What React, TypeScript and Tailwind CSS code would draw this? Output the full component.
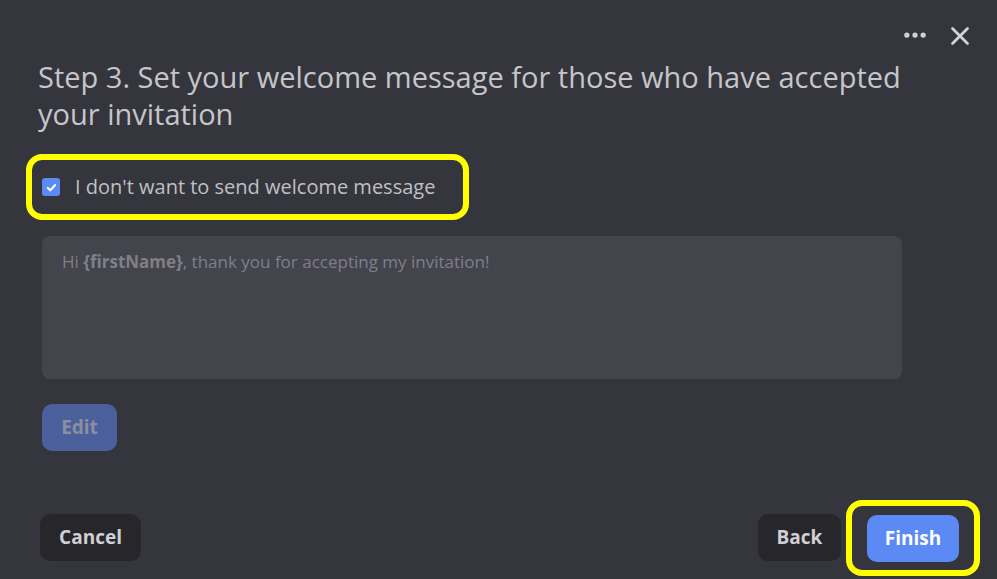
import { MoreHorizontal, X } from "lucide-react";

export default function App() {
  return (
    <div
      className="flex h-[579px] w-[997px] flex-col bg-[#35353d] text-[#c9c9cd]"
      style={{ fontFamily: "'Open Sans', 'Noto Sans', sans-serif" }}
    >
      <div className="flex h-[58px] items-start justify-end gap-[16px] pr-[22px] pt-[21px]">
        <MoreHorizontal className="h-[28px] w-[28px] text-[#d4d4d8]" strokeWidth={2.5} />
        <X className="h-[30px] w-[30px] text-[#d4d4d8]" strokeWidth={2.2} />
      </div>

      <h1 className="ml-[38px] w-[880px] text-[29px] leading-[37px] font-normal text-[#c6c6ca]">
        Step 3. Set your welcome message for those who have accepted your invitation
      </h1>

      <div className="ml-[26px] mt-[22px] flex h-[66px] w-[443px] items-center gap-[15px] rounded-[16px] border-[6px] border-[#ffff00] pl-[10px]">
        <span className="flex h-[18px] w-[18px] items-center justify-center rounded-[3px] bg-[#5b8af5]">
          <svg viewBox="0 0 16 16" className="h-[13px] w-[13px]" fill="none" stroke="white" strokeWidth={2.6} strokeLinecap="round" strokeLinejoin="round">
            <path d="M3.5 8.5l3 3 6-6.5" />
          </svg>
        </span>
        <span className="text-[20px] text-[#c0c0c4]">I don't want to send welcome message</span>
      </div>

      <div className="ml-[42px] mt-[16px] h-[143px] w-[860px] rounded-[8px] bg-[#44444d] px-[20px] pt-[13px] text-[17px] text-[#7f7f88]">
        Hi <b className="font-bold">{"{firstName}"}</b>, thank you for accepting my invitation!
      </div>

      <div className="ml-[42px] mt-[25px]">
        <button className="h-[47px] w-[75px] rounded-[10px] bg-[#4a5f9c] text-[19px] font-bold text-[#8b8f9e]">
          Edit
        </button>
      </div>

      <div className="mt-auto flex items-center justify-between pb-[18px] pl-[40px] pr-[17px]">
        <button className="h-[47px] w-[101px] rounded-[10px] bg-[#27272b] text-[19px] font-bold text-[#d0d0d4]">
          Cancel
        </button>
        <div className="flex items-center gap-[5px]">
          <button className="h-[47px] w-[83px] rounded-[10px] bg-[#27272b] text-[19px] font-bold text-[#d0d0d4]">
            Back
          </button>
          <div className="-mb-[15px] -mt-[14px] flex h-[76px] w-[134px] items-center justify-center rounded-[16px] border-[6px] border-[#ffff00]">
            <button className="h-[47px] w-[92px] rounded-[10px] bg-[#5b8af5] text-[19px] font-bold text-white">
              Finish
            </button>
          </div>
        </div>
      </div>
    </div>
  );
}
